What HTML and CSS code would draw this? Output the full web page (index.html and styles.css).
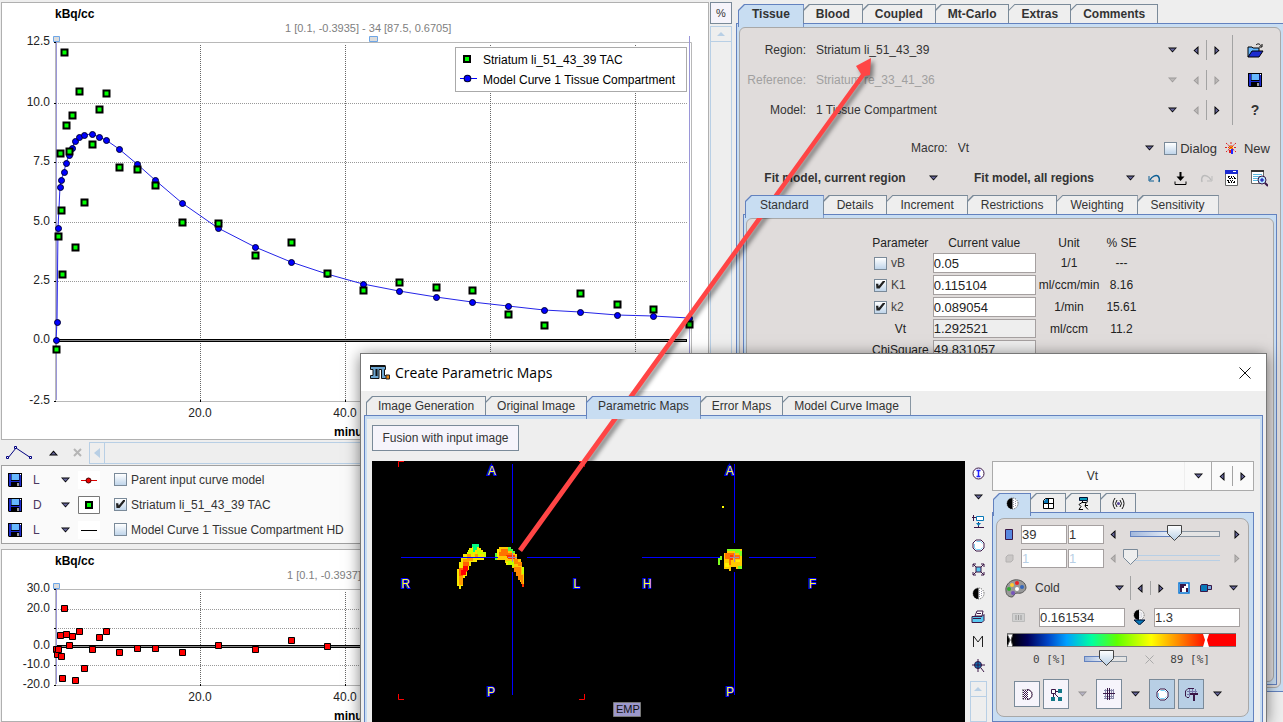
FILE: index.html
```html
<!DOCTYPE html>
<html lang="en">
<head>
<meta charset="utf-8">
<title>Create Parametric Maps</title>
<link rel="stylesheet" href="styles.css">
</head>
<body>
<svg class="defs" aria-hidden="true">
  <symbol id="down" viewBox="0 0 9 6"><path d="M0 .5h9L4.500 5.500z" fill="#000"/><path d="M1.500 1.500h6L4.500 4.300z" fill="#66669a"/></symbol>
  <symbol id="up" viewBox="0 0 9 6"><path d="M0 5.500h9L4.500 .5z" fill="#000"/><path d="M2 4.500h5L4.500 2z" fill="#66669a"/></symbol>
  <symbol id="left" viewBox="0 0 6 9"><path d="M5.500 0v9L.5 4.500z" fill="#000"/><path d="M4.500 2v5L1.800 4.500z" fill="#66669a"/></symbol>
  <symbol id="right" viewBox="0 0 6 9"><path d="M.5 0v9l5-4.500z" fill="#000"/><path d="M1.500 2v5l2.700-2.500z" fill="#66669a"/></symbol>
  <symbol id="floppy" viewBox="0 0 14 14"><path d="M0 0h14v14H1l-1-1z" fill="#000"/><path d="M1 1h12v12H1z" fill="#1c2bd0"/><path d="M3 0h8.500v8H3z" fill="#000"/><path d="M3.500 1h7.500v6H3.500z" fill="#66b8ff"/><path d="M3 9h8.500v5H3z" fill="#000"/><path d="M9 10h2v3H9z" fill="#999"/><path d="M12 1h1v1h-1z" fill="#fff"/></symbol>
  <symbol id="half" viewBox="0 0 13 13"><circle cx="6.500" cy="6.500" r="5.500" fill="#fff" stroke="#555" stroke-dasharray="1 1"/><path d="M6.500 1a5.500 5.500 0 0 0 0 11z" fill="#000"/><path d="M7.500 3v7M9.500 4v5" stroke="#99a" stroke-dasharray="1 1"/></symbol>
  <symbol id="green" viewBox="-5 -5 10 10"><path d="M-4-4h8v8h-8z" fill="#000"/><path d="M-2-2h4v4h-4z" fill="#0f0"/></symbol>
  <symbol id="blue" viewBox="-5 -5 10 10"><circle r="3" fill="#00f" stroke="#000034"/></symbol>
  <symbol id="red" viewBox="-5 -5 10 10"><path d="M-3-3h6v6h-6z" fill="#f00" stroke="#000"/></symbol>
  <symbol id="blob" viewBox="0 0 13 13"><path d="M4 1h5l3 3v5l-3 3H4L1 9V4z" fill="#fff" stroke="#3a1747"/><path d="M4.500 2.500h4l2 2M2.500 5v4l2 1.500h4l2-2" fill="none" stroke="#7cd0f5"/></symbol>
</svg>

<div class="app">
  <div class="plots">
    <section class="panel plot-main">
      <svg class="plot" viewBox="2 3 706 436" preserveAspectRatio="xMinYMin meet" role="img" aria-label="Tissue curve">
        <g class="axis-box"><path d="M55 42.500H691.500V401M55.500 43V401.500H691"/></g>
        <g class="grid-h"><path d="M56 103.500H687M56 162.500H687M56 222.500H687M56 281.500H687"/></g>
        <g class="grid-v"><path d="M200.500 45V401M345.500 45V401M490.500 45V401M635.500 45V401"/></g>
        <path class="tick" d="M54 42.500h2M54 103.500h2M54 162.500h2M54 222.500h2M54 281.500h2M54 340.500h2M54 401.500h2M200.500 400v2M345.500 400v2"/>
        <path d="M56.500 38V400M689.500 36V400" stroke="#9a96d8"/>
        <path d="M57 340.500H687" stroke="#000" stroke-width="3"/><path d="M57 340.500H686" stroke="#888"/>
        <g fill="#dcdcdc" stroke="#6ea6e6"><path d="M53.500 36.500h6v5h-6zM369.500 36.500h8v5h-8z"/></g>
        <polyline class="curve" points="56,340 57,322 58,228 60,187 61,180 64,172 66,163 69,155 72,148 75,141 79,137 84,135 92,134 99,137 106,140 119,149 137,164 155,180 182,203 218,228 255,247 291,262 327,274 363,284 399,291 436,297 472,302 508,306 544,310 580,312 617,315 653,316 689,318"/>
        <g id="model-points"></g>
        <g id="tac-points"></g>
        <rect x="455.500" y="47.500" width="231" height="44" fill="#fff" stroke="#aaa"/>
        <use href="#green" x="462" y="54" width="10" height="10"/>
        <path d="M460 78.500h17" stroke="#00f"/><use href="#blue" x="462" y="73" width="11" height="11"/>
        <g class="legend"><text x="483" y="64">Striatum li_51_43_39 TAC</text><text x="483" y="84">Model Curve 1 Tissue Compartment</text></g>
        <text class="unit" x="55" y="18">kBq/cc</text>
        <text class="range" x="285" y="32">1 [0.1, -0.3935] - 34 [87.5, 0.6705]</text>
        <g class="y-labels"><text x="50" y="45">12.5</text><text x="50" y="106">10.0</text><text x="50" y="165">7.5</text><text x="50" y="225">5.0</text><text x="50" y="284">2.5</text><text x="50" y="343">0.0</text><text x="50" y="404">-2.5</text></g>
        <g class="x-labels"><text x="200" y="417">20.0</text><text x="345" y="417">40.0</text></g>
        <text class="unit" x="334" y="436">minutes</text>
      </svg>
    </section>

    <div class="curve-bar">
      <button class="flat" aria-label="Curves"><svg width="28" height="14" viewBox="0 0 28 14"><path d="M2 12L10 2l15 10" fill="none" stroke="#000080"/><path d="M.5 10.500h2v2h-2zM8.500 .5h2v2h-2zM23.500 10.500h2v2h-2z" fill="#fff" stroke="#000080"/></svg></button>
      <button class="flat" aria-label="Up"><svg width="9" height="6"><use href="#up"/></svg></button>
      <button class="flat" aria-label="Remove"><svg width="9" height="9"><path d="M1 1l7 7M8 1L1 8" stroke="#b5b5b5" stroke-width="2"/></svg></button>
      <div class="h-scroll"><button aria-label="Scroll left"><svg width="6" height="10"><path d="M6 0v10L0 5z" fill="#b8cfe5"/></svg></button></div>
    </div>

    <section class="panel curve-list">
      <div class="curve-row"><svg width="14" height="14"><use href="#floppy"/></svg><span class="kind">L</span><svg class="drop" width="9" height="6"><use href="#down"/></svg><svg class="swatch" width="22" height="18"><path d="M3 9.500h16" stroke="#d00"/><circle cx="10.500" cy="9.500" r="2.500" fill="#e00" stroke="#400"/></svg><label><input type="checkbox">Parent input curve model</label></div>
      <div class="curve-row"><svg width="14" height="14"><use href="#floppy"/></svg><span class="kind">D</span><svg class="drop" width="9" height="6"><use href="#down"/></svg><svg class="swatch" width="22" height="18"><path d="M.5 .5h21v17H.5z" fill="none" stroke="#777"/><use href="#green" x="6" y="4" width="10" height="10"/></svg><label><input type="checkbox" checked>Striatum li_51_43_39 TAC</label></div>
      <div class="curve-row"><svg width="14" height="14"><use href="#floppy"/></svg><span class="kind">L</span><svg class="drop" width="9" height="6"><use href="#down"/></svg><svg class="swatch" width="22" height="18"><path d="M3 9.500h16" stroke="#000"/></svg><label><input type="checkbox">Model Curve 1 Tissue Compartment HD</label></div>
    </section>

    <section class="panel plot-residual">
      <svg class="plot" viewBox="2 551 706 171" preserveAspectRatio="xMinYMin meet" role="img" aria-label="Residuals">
        <g class="axis-box"><path d="M55 590.500H691.500V686M55.500 591V686.500H691"/></g>
        <g class="grid-h"><path d="M56 610.500H687M56 629.500H687M56 666.500H687"/></g>
        <g class="grid-v"><path d="M200.500 593V686M345.500 593V686"/></g>
        <path class="tick" d="M54 590.500h2M54 610.500h2M54 629.500h2M54 647.500h2M54 666.500h2M54 686.500h2M200.500 685v2M345.500 685v2"/>
        <path d="M56.500 588V685" stroke="#9a96d8"/>
        <path d="M57 647.500H687" stroke="#000" stroke-width="3"/><path d="M57 647.500H686" stroke="#888"/>
        <path d="M53.500 584.500h6v5h-6z" fill="#dcdcdc" stroke="#6ea6e6"/>
        <g id="residual-points"></g>
        <text class="unit" x="55" y="566">kBq/cc</text>
        <text class="range" x="287" y="580">1 [0.1, -0.3937] - 34</text>
        <g class="y-labels"><text x="50" y="593">30.0</text><text x="50" y="613">20.0</text><text x="50" y="650">0.0</text><text x="50" y="669">-10.0</text><text x="50" y="689">-20.0</text></g>
        <g class="x-labels"><text x="200" y="702">20.0</text><text x="345" y="702">40.0</text></g>
        <text class="unit" x="334" y="721">minutes</text>
      </svg>
    </section>
  </div>

  <div class="side-scroll">
    <button class="percent">%</button>
    <div class="v-scroll"><button aria-label="Scroll up"><svg width="8" height="4"><path d="M0 4h8L4 0z" fill="#b8cfe5"/></svg></button></div>
  </div>

  <main class="model">
    <nav class="tabs bold">
      <button class="tab active">Tissue</button><button class="tab">Blood</button><button class="tab">Coupled</button><button class="tab">Mt-Carlo</button><button class="tab">Extras</button><button class="tab">Comments</button>
    </nav>
    <div class="pane outer"><div class="sheet">
      <div class="choices">
        <div class="choice-rows">
          <div class="choice"><label for="region">Region:</label><select id="region"><option>Striatum li_51_43_39</option></select><svg width="9" height="6"><use href="#down"/></svg><button class="flat" aria-label="Previous region"><svg width="6" height="9"><use href="#left"/></svg></button><i></i><button class="flat" aria-label="Next region"><svg width="6" height="9"><use href="#right"/></svg></button></div>
          <div class="choice off"><label for="reference">Reference:</label><select id="reference" disabled><option>Striatum re_33_41_36</option></select><svg width="9" height="6"><use href="#down"/></svg><button class="flat" aria-label="Previous reference" disabled><svg width="6" height="9"><use href="#left"/></svg></button><i></i><button class="flat" aria-label="Next reference" disabled><svg width="6" height="9"><use href="#right"/></svg></button></div>
          <div class="choice"><label for="model">Model:</label><select id="model"><option>1 Tissue Compartment</option></select><svg width="9" height="6"><use href="#down"/></svg><button class="flat" aria-label="Previous model" disabled><svg width="6" height="9"><use href="#left"/></svg></button><i></i><button class="flat" aria-label="Next model"><svg width="6" height="9"><use href="#right"/></svg></button></div>
        </div>
        <div class="file-tools">
          <button class="flat" aria-label="Open"><svg width="17" height="15" viewBox="0 0 17 15"><path d="M1 14V4h4l1 1h6v4" fill="#66b8ff" stroke="#000"/><path d="M1 14l4-6h11l-4 6z" fill="#1c2bd0" stroke="#000"/><path d="M9 2c2-2 4-1 5 1M15 1v3h-3" fill="none" stroke="#000"/></svg></button>
          <button class="flat" aria-label="Save"><svg width="14" height="14"><use href="#floppy"/></svg></button>
          <button class="flat help">?</button>
        </div>
      </div>
      <div class="macro">
        <label for="macro">Macro:</label><select id="macro"><option>Vt</option></select><svg width="9" height="6"><use href="#down"/></svg>
        <label class="check"><input type="checkbox">Dialog</label>
        <svg width="12" height="12"><path d="M1 1l10 9M11 1L1 10M6 0v6M0 5.500h12" stroke="#d22" stroke-dasharray="2 1"/><path d="M4 4h4v3H4z" fill="#fd0"/><path d="M4 4l4 3M8 4L4 7" stroke="#d22"/><path d="M4 8h2v3H4z" fill="#d22"/><path d="M6 7h2v5H6z" fill="#22f"/></svg>
        <button class="flat">New</button>
      </div>
      <div class="fit">
        <button class="flat strong fit-current">Fit model, current region</button><button class="flat" aria-label="Fit options"><svg width="9" height="6"><use href="#down"/></svg></button>
        <button class="flat strong fit-all">Fit model, all regions</button><button class="flat" aria-label="Fit all options"><svg width="9" height="6"><use href="#down"/></svg></button>
        <div class="fit-tools">
          <button class="flat" aria-label="Undo"><svg width="13" height="9"><path d="M1 2v5h5" fill="none" stroke="#0d5f94"/><path d="M2 6C4 2 8 1 10 2q2 2 1 6" fill="none" stroke="#0d5f94" stroke-width="1.500"/></svg></button>
          <button class="flat" aria-label="Store"><svg width="13" height="13"><path d="M6.500 0v6" stroke="#000" stroke-width="2"/><path d="M2.500 4.500h8l-4 4.500z" fill="#000"/><path d="M1 9.500v3h11v-3" fill="none" stroke="#000"/></svg></button>
          <button class="flat" aria-label="Redo"><svg width="13" height="9"><path d="M12 2v5H7" fill="none" stroke="#bbb"/><path d="M11 6C9 2 5 1 3 2Q1 4 2 8" fill="none" stroke="#bbb" stroke-width="1.500"/></svg></button>
          <button class="flat" aria-label="Report"><svg width="13" height="16"><path d="M.5 .5h12v15H.5z" fill="#fff" stroke="#666"/><path d="M0 0h13v4H0z" fill="#1c2bd0"/><path d="M8 1.500h3" stroke="#fff"/><path d="M3 6.500h6M4 8.500h7M2 10.500h6M3 12.500h7" stroke="#000" stroke-dasharray="2 1 1 1"/><path d="M3 7.500h7M3 11.500h7" stroke="#000" stroke-dasharray="1 2"/></svg></button>
          <button class="flat" aria-label="View table"><svg width="17" height="17"><path d="M.5 .5h12v13H.5z" fill="#fff" stroke="#666"/><path d="M0 0h13v2H0z" fill="#333"/><path d="M2 4.500h9M2 6.500h8M2 8.500h5M2 10.500h5" stroke="#5ab8e0"/><circle cx="11" cy="10" r="4" fill="#b9e6ff" stroke="#3a1747"/><path d="M9 10h4M11 8v4" stroke="#00a" /><path d="M14 13l3 3" stroke="#3a1747" stroke-width="2"/></svg></button>
        </div>
      </div>
      <nav class="tabs inner-tabs">
        <button class="tab active">Standard</button><button class="tab">Details</button><button class="tab">Increment</button><button class="tab">Restrictions</button><button class="tab">Weighting</button><button class="tab">Sensitivity</button>
      </nav>
      <div class="pane inner"><div class="sheet">
        <table>
          <thead><tr><th>Parameter</th><th>Current value</th><th>Unit</th><th>% SE</th></tr></thead>
          <tbody>
          <tr><td><label class="check"><input type="checkbox">vB</label></td><td><input type="text" aria-label="vB value" value="0.05"></td><td>1/1</td><td>---</td></tr>
          <tr><td><label class="check"><input type="checkbox" checked>K1</label></td><td><input type="text" aria-label="K1 value" value="0.115104"></td><td>ml/ccm/min</td><td>8.16</td></tr>
          <tr><td><label class="check"><input type="checkbox" checked>k2</label></td><td><input type="text" aria-label="k2 value" value="0.089054"></td><td>1/min</td><td>15.61</td></tr>
          <tr class="result"><td>Vt</td><td><input type="text" aria-label="Vt value" value="1.292521" readonly></td><td>ml/ccm</td><td>11.2</td></tr>
          <tr class="result"><td>ChiSquare</td><td><input type="text" aria-label="ChiSquare value" value="49.831057" readonly></td><td></td><td></td></tr>
          </tbody>
        </table>
      </div></div>
    </div></div>
  </main>
</div>

<div class="dialog" role="dialog" aria-labelledby="dialog-title">
  <header class="title-bar">
    <svg width="20" height="15" viewBox="0 0 20 15"><path d="M.5 1.500h15v3h-1v6h2v3h-5v-9H9v9H.5v-3H3v-6H.5z" fill="#6ba5d0" stroke="#111"/><path d="M0 1h15.500M6.500 4v7" stroke="#111" stroke-width="2"/><path d="M16 10h3.500v4H16z" fill="#e8820c" stroke="#222"/></svg>
    <h1 id="dialog-title">Create Parametric Maps</h1>
    <button class="flat" aria-label="Close"><svg width="12" height="12"><path d="M.5 .5l11 11M11.500 .5l-11 11" stroke="#111"/></svg></button>
  </header>
  <nav class="tabs dialog-tabs">
    <button class="tab">Image Generation</button><button class="tab">Original Image</button><button class="tab active">Parametric Maps</button><button class="tab">Error Maps</button><button class="tab">Model Curve Image</button>
  </nav>
  <div class="pane dialog-pane">
    <button class="fusion">Fusion with input image</button>
    <div class="viewer">
      <div class="canvas">
        <svg viewBox="0 3 1779 783" preserveAspectRatio="xMinYMin slice" role="img" aria-label="Parametric map slices">
          <path d="M0 0h3000v1500H0z" fill="#000"/>
          <g shape-rendering="crispEdges">
            <path d="M300 252h21v12h6v6h6v6h8v16h-6v8h-20v6h-18v12h-6v12h-6v18h-6v6h-6v24h-6v10h-6v-10h-6v-51h6v-21h6v-12h6v-12h12v-6h6v-12h9z" fill="#f6e800"/>
            <path d="M300 252h21v10h-6v8h-12zM303 276h6v-6h-6z" fill="#00ff80"/><path d="M290 270h12v12h12v-12h14v6h13v14h-6v-8h-12v6h-18v-6h-20z" fill="#c6ff00"/>
            <path d="M285 282h12v12h6v8h-12v6h-18v-12h12zM261 335h12v40h-12zM309 282h8v10h-8z" fill="#ff9c00"/>
            <path d="M273 306h18v12h-6v18h-12v12h-12v-24h12z" fill="#ff6000"/><path d="M273 318h14v16h-6v12h-14v-16h6z" fill="#f00"/>
            <path d="M381 261h36v6h6v6h6v9h6v15h12v12h3v12h6v58h-7v-12h-6v-6h-6v-12h-6v-12h-6v-12h-6v-10h-12v-6h-8v-8h-30v-20h6v-13h6z" fill="#ffc800"/>
            <path d="M407 261h10v6h6v6h6v6h-10v-6h-12zM369 280h6v20h-6z" fill="#4dff40"/><path d="M401 303h24v18h-6v-6h-12v-6h-6zM449 322h7v20h-7z" fill="#c6ff00"/><path d="M375 268h6v24h-6zM401 306h6v8h-6z" fill="#fff000"/>
            <path d="M387 267h20v12h12v15h-12v-6h-26v-12h6z" fill="#ff7200"/><path d="M401 284h28v12h-22zM431 330h12v8h-12zM449 372h7v8h-7z" fill="#ff3000"/>
            <path d="M425 297h12v8h12v14h-12v-8h-12zM425 322h22v22h6v28h-6v-12h-10v-12h-6v-12h-6z" fill="#ff8600"/>
            <path d="M1065 267h45v59h-18v-4h-15v11h-6v-7h-15v-46h9z" fill="#ffcb00"/>
            <path d="M1065 267h40v6h5v14h-9v-8h-12v-6h-24zM1044 288h6v12h-6v15h-6v-21h6zM1098 318h12v8h-12z" fill="#7fff20"/><path d="M1059 310h12v10h-12zM1092 300h12v6h-12z" fill="#fff000"/>
            <path d="M1059 280h30v6h15v12h-15v-6h-12v24h-6v-20h-12z" fill="#ff7200"/><path d="M1074 285h10v16h-10z" fill="#ff3800"/>
            <path d="M1050 138h6v6h-6z" fill="#ff0"/>
          </g>
          <path d="M421.500 12V249M421.500 336V705M87 292.500H378M465 292.500H624M1087.500 12V249M1087.500 336V705M810 292.500H1044M1131 292.500H1332" stroke="#00f" stroke-width="3"/>
          <path d="M421.500 279v27M408 292.500h27M1087.500 279v27M1074 292.500h27" stroke="#a58bb0" stroke-width="3"/>
          <path d="M79.500 21V4.500H96M621 4.500h16.500V21M79.500 702v16.500H96M621 718.500h16.500V702" fill="none" stroke="#f00" stroke-width="3"/>
          <g class="orient"><text x="347" y="45">A</text><text x="345" y="708">P</text><text x="88" y="384">R</text><text x="604" y="384">L</text><text x="1061" y="45">A</text><text x="1062" y="708">P</text><text x="812" y="384">H</text><text x="1310" y="384">F</text></g>
          <path d="M724.500 727.500h81v42h-81z" fill="#9c98cc" stroke="#777" stroke-width="3"/><text class="emp" x="732" y="759">EMP</text>
        </svg>
      </div>
      <div class="tool-strip">
        <button class="flat" aria-label="Info"><svg width="13" height="13"><circle cx="6.500" cy="6.500" r="5.500" fill="#fff" stroke="#3a1747"/><path d="M4.500 3.500h4M6.500 3.500v6M4.500 9.500h4" stroke="#22f" stroke-width="1.500"/></svg></button>
        <button class="flat" aria-label="More"><svg width="9" height="6"><use href="#down"/></svg></button>
        <button class="flat" aria-label="Layout"><svg width="13" height="13"><path d="M1.500 0v6M0 2.500h4M2 12.500h10M6.500 7v5" stroke="#3a1747"/><path d="M4.500 1.500h7v4h-7z" fill="#fff" stroke="#0878b8"/><path d="M4 8h5l-2.500 3z" fill="#0878b8"/></svg></button>
        <button class="flat" aria-label="Contour"><svg width="13" height="13"><use href="#blob"/></svg></button>
        <button class="flat" aria-label="Fit"><svg width="13" height="13"><path d="M1 1l11 11M12 1L1 12M1 4V1h3M9 1h3v3M1 9v3h3M12 9v3H9" stroke="#3a1747" fill="none"/><path d="M4 4h5v5H4z" fill="#5ac8f0" stroke="#3a1747"/></svg></button>
        <button class="flat" aria-label="Contrast"><svg width="13" height="13"><use href="#half"/></svg></button>
        <button class="flat" aria-label="Print"><svg width="14" height="14"><path d="M4 6l2-5h6l-1 5z" fill="#fff" stroke="#3a1747"/><path d="M1 6.500h10l2-2v6l-2 2H1z" fill="#5ac8f0" stroke="#3a1747"/><path d="M2 8.500h8M6 3.500h4" stroke="#3a1747"/></svg></button>
        <button class="flat" aria-label="Markers"><svg width="12" height="12"><path d="M1.500 12V1l4.500 6 4.500-6v11" fill="none" stroke="#222"/></svg></button>
        <button class="flat" aria-label="Target"><svg width="13" height="13"><path d="M6 0v13M0 6h13M9 9l3 4" stroke="#3a1747"/><circle cx="6" cy="6" r="3.500" fill="#0878b8" stroke="#3a1747"/><path d="M6 2v8M2 6h8" stroke="#3a1747"/></svg></button>
        <div class="v-scroll small"><button aria-label="Scroll up"><svg width="8" height="4"><path d="M0 4h8L4 0z" fill="#b8cfe5"/></svg></button></div>
      </div>
      <div class="controls">
        <div class="map-combo"><select aria-label="Map"><option>Vt</option></select><span class="cell"><svg width="9" height="6"><use href="#down"/></svg></span><span class="cell nav"><button class="flat" aria-label="Previous map"><svg width="6" height="9"><use href="#left"/></svg></button><i></i><button class="flat" aria-label="Next map"><svg width="6" height="9"><use href="#right"/></svg></button></span></div>
        <nav class="tabs icon-tabs">
          <button class="tab active" aria-label="Colors"><svg width="13" height="13"><use href="#half"/></svg></button>
          <button class="tab" aria-label="Layout"><svg width="11" height="11"><path d="M2.500 .5h8v10H.5v-8z" fill="#fff" stroke="#000"/><path d="M1 3l2-2h2v4H1z" fill="#0878b8"/><path d="M5.500 0v11M0 5.500h11" stroke="#000"/></svg></button>
          <button class="tab" aria-label="Tools"><svg width="11" height="13"><path d="M1.500 .5h8v3h-8z" fill="#0898b8" stroke="#013"/><path d="M4.500 4v2M1 7.500l3-2h4l2-1M8 6l-1 3 3 3.500M5 12.500H1l2-3-2-2M10 8.500H7" fill="#fff" stroke="#000"/></svg></button>
          <button class="tab" aria-label="Signal"><svg width="13" height="13"><path d="M3 1Q-1 6.500 3 12M10 1q4 5.500 0 11M5 3Q2 6.500 5 10M8 3q3 3.500 0 7" fill="none" stroke="#111"/><circle cx="6.500" cy="6.500" r="1.500" fill="#549"/></svg></button>
        </nav>
        <div class="pane color-pane"><div class="sheet">
          <div class="slice"><svg width="9" height="11"><path d="M.5 .5h7v10h-7z" fill="#5888e0" stroke="#3a1747"/></svg><input type="text" aria-label="Slice" value="39"><input class="step" type="text" aria-label="Slice step" value="1"><svg width="6" height="9"><use href="#left"/></svg><input type="range" aria-label="Slice position" value="49"><svg width="6" height="9"><use href="#right"/></svg></div>
          <div class="slice off"><svg width="9" height="9"><path d="M1 3l2-2h5v5L6 8H1z" fill="#999" stroke="#555"/></svg><input type="text" aria-label="Frame" value="1" disabled><input class="step" type="text" aria-label="Frame step" value="1" disabled><svg width="6" height="9"><use href="#left"/></svg><input type="range" class="empty" aria-label="Frame position" value="0" disabled><svg width="6" height="9"><use href="#right"/></svg></div>
          <div class="palette">
            <svg width="22" height="19"><path d="M9 1C4 2 0 7 1 12c0 4 3 6 6 6 2 0 2-4 5-4 4 1 8-1 9-5 0-6-6-9-12-8z" fill="#999" stroke="#555"/><circle cx="12" cy="4" r="2" fill="#e22"/><circle cx="7" cy="6" r="2" fill="#fc3"/><circle cx="4" cy="10" r="2" fill="#3a3"/><circle cx="17" cy="8" r="2" fill="#36b"/><circle cx="12" cy="10" r="2" fill="#fff"/><circle cx="8" cy="14" r="2" fill="#75b"/></svg>
            <select aria-label="Color table"><option>Cold</option></select><svg width="9" height="6"><use href="#down"/></svg><i class="tall"></i><svg width="6" height="9"><use href="#left"/></svg><i></i><svg width="6" height="9"><use href="#right"/></svg>
            <svg class="invert" width="12" height="12"><path d="M1 1h10v10H1z" fill="#fff" stroke="#0878d8" stroke-width="1.500"/><path d="M2 2h6v2H6v2H4v4H2zM8 6h2v4H8z" fill="#3a1747"/></svg>
            <svg width="12" height="10"><path d="M.5 3l1-1.500h6v7h-7z" fill="#0878b8" stroke="#3a1747"/><path d="M8 2.500h3.500v4H8" fill="#7ad" stroke="#3a1747"/></svg>
            <svg class="last" width="9" height="6"><use href="#down"/></svg>
          </div>
          <div class="limits"><svg width="13" height="9"><path d="M.5 .5h12v8H.5z" fill="#d0d0d0" stroke="#bbb"/><path d="M4 2v5M6.500 2v5M9 2v5" stroke="#999"/></svg><input type="text" aria-label="Lower limit" value="0.161534"><svg width="13" height="16"><svg width="12" height="12"><use href="#half"/></svg><path d="M1 11h11l-5.500 5z" fill="#0878b8" stroke="#013"/></svg><input type="text" aria-label="Upper limit" value="1.3"></div>
          <div class="ramp"><svg width="6" height="13"><path d="M0 0h6L4 6l2 7H0l3-7z" fill="#fff" stroke="#555"/></svg><svg class="end" width="6" height="13"><path d="M0 0h6L4 6l2 7H0l2-7z" fill="#fff"/></svg></div>
          <div class="percents"><output>0 [%]</output><input type="range" aria-label="Color center" value="55"><button class="flat" aria-label="Reset"><svg width="9" height="9"><path d="M.5 .5l8 8M8.500 .5l-8 8" stroke="#aaa"/></svg></button><output>89 [%]</output></div>
          <div class="modes">
            <button class="mode first" aria-label="Interpolate"><svg width="13" height="13"><path d="M1.500 1.500h5a5 5 0 0 1 0 10h-5z" fill="#fff" stroke="#777" stroke-dasharray="1 1"/><path d="M2.500 2v9M4.500 2v9M6.500 2v9" stroke="#3a1747" stroke-dasharray="1 1"/><path d="M3.500 2v9M5.500 2v9" stroke="#3a1747" stroke-dasharray="1 1" stroke-dashoffset="1"/><path d="M6 1.500a5 5 0 0 1 0 10" fill="none" stroke="#3a1747"/></svg></button>
            <button class="mode" aria-label="Blocks"><svg width="13" height="13"><path d="M1.500 1.500h4v4h-4z" fill="#fff" stroke="#3a1747"/><path d="M8 1h4v4H8zM1 9h4v4H1zM8 9h4v4H8z" fill="#178"/><path d="M3.500 6v3M6 3.500h2M5 6l3 3" stroke="#3a1747"/></svg></button>
            <svg class="pale" width="9" height="6"><use href="#down"/></svg>
            <button class="mode" aria-label="Grid"><svg width="12" height="12"><path d="M2.500 1v10M8.500 1v10M10.500 1v10M1 2.500h10M1 8.500h10M1 10.500h10" stroke="#88a"/><path d="M4.500 0v12M6.500 0v12M0 5.500h12" stroke="#3a1747"/></svg></button>
            <svg width="9" height="6"><use href="#down"/></svg>
            <button class="mode on" aria-label="Outline"><svg width="13" height="13"><use href="#blob"/></svg></button>
            <button class="mode on" aria-label="Annotation"><svg width="13" height="13"><path d="M4 9.500H2L.5 8V3L3 .5h6" stroke="#3a1747" fill="none"/><path d="M4.500 1v8M7.500 1v4M10.500 1v4M2 3.500h10M2 6.500h3" stroke="#77a" fill="none"/><path d="M5 5h8v2h-3v6H8V7H5z" fill="#3a1747"/></svg></button>
            <svg width="9" height="6"><use href="#down"/></svg>
          </div>
        </div></div>
      </div>
    </div>
  </div>
</div>

<svg class="callout" width="400" height="540" viewBox="500 40 400 540" aria-hidden="true"><path d="M518 549L861 74l-5-8 15-8-1 17-5 1L522 552z" fill="#ff4545"/></svg>
<script src="points.js"></script>
</body>
</html>
```
FILE: points.js
```js
// Marker positions in plot coordinates, listed as x,y pairs.
const series = {
  "model-points": ["blue", [56,340,57,322,58,228,60,187,61,180,64,172,66,163,69,155,72,148,75,141,79,137,84,135,92,134,99,137,106,140,119,149,137,164,155,180,182,203,218,228,255,247,291,262,327,274,363,284,399,291,436,297,472,302,508,306,544,310,580,312,617,315,653,316,689,318]],
  "tac-points": ["green", [64,52,79,91,106,93,99,109,72,115,66,125,92,144,60,153,69,151,119,167,137,169,155,185,84,202,61,210,182,222,218,223,58,236,75,247,62,274,255,255,291,242,327,273,363,290,56,349,399,282,436,287,472,290,508,314,544,325,580,293,617,304,653,309,689,324]],
  "residual-points": ["red", [56,650,57,655,58,650,64,609,60,636,66,635,72,637,79,632,106,632,99,638,69,646,92,650,119,653,137,649,155,649,182,653,218,646,255,650,291,641,327,647,61,657,62,679,75,681,84,669]]
};
for (const [id, [shape, xy]] of Object.entries(series)) {
  const group = document.getElementById(id);
  for (let i = 0; i < xy.length; i += 2) {
    const mark = document.createElementNS("http://www.w3.org/2000/svg", "use");
    mark.setAttribute("href", "#" + shape);
    mark.setAttribute("x", xy[i] - 5 + 0.5);
    mark.setAttribute("y", xy[i + 1] - 5 + 0.5);
    mark.setAttribute("width", 10);
    mark.setAttribute("height", 10);
    group.append(mark);
  }
}
```
FILE: styles.css
```css
* { box-sizing: border-box; }
body { margin: 0; height: 100vh; overflow: hidden; position: relative; background: #eee; color: #333; font: 12px "Liberation Sans", Arial, sans-serif; }
button, input, select { font: inherit; color: inherit; margin: 0; }
button { padding: 0; }
select { appearance: none; border: 0; background: none; padding: 0; opacity: 1; }
svg { display: block; flex: none; }
i { width: 1px; height: 20px; background: #a3a3a3; }
.defs { position: absolute; width: 0; height: 0; }
.flat { border: 0; background: none; display: flex; align-items: center; justify-content: center; }
.strong { font-weight: bold; }

.app { display: flex; height: 100%; gap: 1px; padding: 2px 0 0 1px; }
.plots { flex: 1 1 708px; min-width: 0; display: flex; flex-direction: column; }
.panel { border: 1px solid #b0b0b0; background: #fff; flex: none; }
.plot { width: 100%; font-size: 12px; fill: #222; }
.plot-residual { margin-top: 5px; flex: 1; min-height: 0; overflow: hidden; }
.axis-box { fill: none; stroke: #b8b8b8; }
.grid-h, .grid-v { stroke: #999; stroke-dasharray: 1 1; }
.grid-v { stroke: #666; }
.tick { stroke: #000; }
.curve { fill: none; stroke: #2424e8; }
.unit { font-weight: bold; fill: #000; }
.range { font-size: 11px; fill: #808080; }
.y-labels { text-anchor: end; }
.x-labels { text-anchor: middle; }
.legend { fill: #000; }

.curve-bar { display: flex; align-items: center; height: 25px; padding-left: 5px; gap: 15px; }
.h-scroll { flex: 1; height: 22px; border: 1px solid #b8cfe5; margin-left: -8px; }
.h-scroll button { width: 15px; height: 20px; border: 0; border-right: 1px solid #b8cfe5; background: none; display: flex; align-items: center; justify-content: center; }
.curve-list { background: #fafafa; padding: 1px 0 1px 6px; border-color: #a0a0a0; }
.curve-row { display: flex; align-items: center; height: 25px; }
.kind { width: 28px; margin-left: 11px; color: #4a3860; }
.drop { margin-right: 8px; }
.swatch { background: #fff; margin-right: 14px; }
label { white-space: nowrap; }
.curve-row label, .check { display: flex; align-items: center; gap: 4px; }
input[type=checkbox] { appearance: none; width: 13px; height: 13px; border: 1px solid #7a8a99; background: linear-gradient(#fff, #c0d5ea); flex: none; }
input[type=checkbox]:checked::after { content: ""; display: block; width: 9px; height: 8px; margin: 1px; background: #222; clip-path: polygon(0 40%, 25% 40%, 30% 70%, 80% 0, 100% 0, 100% 15%, 40% 100%, 5% 100%); }

.side-scroll { width: 22px; flex: none; display: flex; flex-direction: column; gap: 2px; }
.percent { height: 22px; border: 1px solid #7a8a99; background: #f6f4fb; font-size: 11px; }
.v-scroll { flex: 1; border: 1px solid #b8cfe5; }
.v-scroll button { width: 100%; height: 15px; border: 0; border-bottom: 1px solid #b8cfe5; background: none; display: flex; align-items: center; justify-content: center; }

.model { flex: 1 1 547px; min-width: 0; display: flex; flex-direction: column; margin: 2px 0 30px 3px; }
.tabs { display: flex; padding-left: 2px; position: relative; z-index: 1; }
.tab { height: 19px; padding: 0 12px; border: 1px solid #7a8a99; border-bottom: 0; margin-right: -1px; background: linear-gradient(135deg, #7a8a99 5px, #eee 6px) border-box; clip-path: polygon(6px 0, 100% 0, 100% 100%, 0 100%, 0 6px); white-space: nowrap; }
.tab.active { height: 23px; margin-bottom: -4px; padding-bottom: 4px; border-color: #6382bf; background: linear-gradient(135deg, #6382bf 5px, #c8ddf2 6px) border-box; }
.bold { font-weight: bold; }
.bold .tab.active { padding: 0 13px 4px; }
.pane { border: 1px solid #6382bf; padding: 3px 2px 2px; background: #c8ddf2; flex: 1; min-height: 0; display: flex; flex-direction: column; }
.outer { border-right: 0; padding-bottom: 3px; }
.sheet { flex: 1; border: 1px solid #a8a8a8; border-radius: 6px; background: #e0dcdb; display: flex; flex-direction: column; min-width: 0; }
.outer > .sheet { padding: 7px 3px 2px 3px; }
.choices { display: flex; }
.choice-rows { flex: 1; border-right: 1px solid #a3a3a3; padding-right: 9px; }
.choice { display: flex; align-items: center; height: 30px; }
.choice label { width: 63px; text-align: right; margin-right: 10px; }
.choice select { flex: 1; }
.choice > svg { margin-right: 13px; }
.choice i { margin: 0 4px; }
.off { color: #a0a0a0; }
.choice select:disabled { color: #a0a0a0; }
.off svg, button:disabled svg { filter: grayscale(1); opacity: .3; }
.off button:disabled svg { opacity: .3; }
.choice button { width: 12px; height: 20px; }
.file-tools { width: 44px; display: flex; flex-direction: column; }
.file-tools button { height: 30px; }
.help { font-weight: bold; font-size: 14px; }
.macro { display: flex; align-items: center; height: 30px; margin-top: 8px; padding: 0 7px 0 168px; }
.macro select { flex: 1; margin-left: 10px; }
.macro .check { margin: 0 8px 0 10px; font-size: 13px; gap: 3px; }
.macro .flat { margin-left: 7px; font-size: 13px; }
.fit { display: flex; align-items: center; height: 30px; padding-left: 23px; }
.fit-current { width: 138px; margin-right: 25px; white-space: nowrap; }
.fit-all { margin: 0 32px 0 36px; white-space: nowrap; }
.fit-tools { flex: 1; display: flex; justify-content: space-between; align-items: center; padding: 0 9px 0 13px; }
.inner-tabs { margin: 2px 0 0 1px; padding-left: 1px; }
.inner-tabs .tab { padding: 0 13px; }
.inner-tabs .tab.active { padding: 0 14px 4px; }
.inner > .sheet { padding: 15px 0 0 124px; }
table { border-collapse: collapse; align-self: flex-start; text-align: center; color: #222; }
th { font-weight: normal; height: 18px; padding: 0; }
td { height: 22px; padding: 0 1px; white-space: nowrap; }
.result td { height: 21px; }
td .check { padding-left: 2px; color: #444; }
td:last-child, th:last-child { padding: 0 0 0 6px; min-width: 36px; }
tr > :nth-child(2) { padding: 0 2px 0 3px; }
input[type=text] { border: 1px solid #a5a0a0; background: #fff; font-size: 13px; padding: 0; height: 20px; width: 103px; min-width: 0; display: block; }
input[type=text][readonly] { background: #eee; height: 19px; }

.dialog { position: absolute; left: 360px; right: 16px; top: 353px; bottom: 0; border: 1px solid #777; border-bottom: 0; background: #eee; box-shadow: 0 2px 14px rgba(0, 0, 0, .5); display: flex; flex-direction: column; overflow: hidden; }
.title-bar { display: flex; align-items: center; background: #fff; height: 37px; padding: 0 15px 0 9px; gap: 5px; margin-bottom: 5px; flex: none; }
h1 { margin: 0; flex: 1; font: 14px "Open Sans", "Noto Sans", sans-serif; color: #000; }
.dialog-tabs { padding-left: 5px; }
.dialog-tabs .tab { padding: 0 11px; }
.dialog-tabs .tab.active { padding: 0 11px 4px; }
.dialog-pane { margin: 0 3px 0 3px; border-bottom: 0; background: #eee; padding: 9px 8px 0 7px; box-shadow: inset 0 3px #c8ddf2, inset 2px 0 #c8ddf2, inset -2px 0 #c8ddf2; }
.fusion { width: 147px; height: 26px; flex: none; border: 1px solid #7a8a99; background: #f6f4fb; white-space: nowrap; }
.viewer { display: flex; flex: 1; margin-top: 10px; min-height: 0; }
.canvas { flex: 1; min-width: 0; background: #000; overflow: hidden; }
.canvas svg { width: 100%; height: 100%; }
.orient { font: 36px "Liberation Sans", sans-serif; fill: #ffff30; stroke: #00f; stroke-width: 6px; paint-order: stroke; }
.emp { font: 33px "Liberation Sans", sans-serif; fill: #111; }
.tool-strip { width: 27px; padding: 0 4px 0 3px; display: flex; flex-direction: column; align-items: center; }
.tool-strip .flat { height: 24px; flex: none; }
.small { width: 17px; margin-top: 4px; }
.controls { width: 262px; flex: none; display: flex; flex-direction: column; }
.map-combo { display: flex; height: 30px; flex: none; border: 1px solid #aaa; background: #fafafa; }
.map-combo select { flex: 1; padding-left: 8px; text-align-last: center; }
.cell { display: flex; width: 27px; align-items: center; justify-content: center; border-left: 1px solid #eee; }
.cell.nav { width: 42px; gap: 7px; border-color: #aaa; }
.icon-tabs { margin-top: 2px; padding-left: 1px; }
.icon-tabs .tab { width: 36px; padding: 0; display: flex; align-items: center; justify-content: center; }
.icon-tabs .tab.active { width: 38px; padding: 0 0 4px; }
.color-pane { padding: 5px 4px 4px 3px; }
.color-pane > .sheet { padding: 3px 8px 0 8px; border-radius: 8px; }
.slice { display: flex; align-items: center; height: 24px; }
.color-pane input[type=text] { height: 19px; }
.slice input[type=text] { width: 46px; margin-left: 7px; }
.slice input.step { width: 36px; margin: 0 6px 0 1px; }
.slice input:disabled { color: #b8cfe5; }
input[type=range] { appearance: none; margin: 0 14px; height: 22px; flex: 1; min-width: 0; width: 40px; background: linear-gradient(90deg, #6382bf 50%, #8a96a3 50%) center / 100% 6px no-repeat; }
input[type=range]::-webkit-slider-runnable-track { height: 4px; margin: 0 1px; background: linear-gradient(90deg, #a3b8dc 0, #f0f4fa 50%, #e4e4e4 50%); }
input[type=range]::-webkit-slider-thumb { appearance: none; width: 15px; height: 16px; margin-top: -7px; background: url("data:image/svg+xml,%3Csvg xmlns='http://www.w3.org/2000/svg' width='15' height='16'%3E%3ClinearGradient id='g' x2='0' y2='1'%3E%3Cstop stop-color='%23fff'/%3E%3Cstop offset='1' stop-color='%23b8cfe5'/%3E%3C/linearGradient%3E%3Cpath d='M.5 .5h14v8l-7 7-7-7z' fill='url(%23g)' stroke='%23444'/%3E%3C/svg%3E"); }
input[type=range].empty { background: linear-gradient(#e0dcdb, #e0dcdb) center / 100% 4px no-repeat, linear-gradient(#b8cfe5, #b8cfe5) center / 100% 6px no-repeat; }
input[type=range].empty::-webkit-slider-runnable-track { background: none; margin: 0 -7px; }
input[type=range].empty::-webkit-slider-thumb { background: url("data:image/svg+xml,%3Csvg xmlns='http://www.w3.org/2000/svg' width='15' height='16'%3E%3Cpath d='M.5 .5h14v8l-7 7-7-7z' fill='%23eee' stroke='%237a8a99'/%3E%3C/svg%3E"); }
.palette { display: flex; align-items: center; height: 36px; flex: none; }
.palette select { flex: 1; margin-left: 8px; }
.palette i { height: 14px; margin: 0 7px; }
.palette i.tall { height: 24px; margin: 0 6px; }
.invert { margin: 0 10px 0 14px; }
.last { margin: 0 2px 0 17px; }
.limits { display: flex; align-items: center; gap: 8px; padding-left: 7px; height: 22px; flex: none; }
.limits input[type=text] { flex: 1; width: 40px; }
.limits input[type=text]:first-of-type { margin-left: 6px; }
.ramp { display: flex; height: 14px; margin: 5px 4px 0 2px; flex: none; border: solid #777; border-width: 1px 0; background: linear-gradient(90deg, #000 2%, #00005a 9%, #0046c8 18%, #00a0ff 26%, #00ffa0 37%, #60ff00 48%, #ff0 63%, #ff8800 75%, red 88%); }
.end { margin-left: 190px; }
.percents { display: flex; align-items: center; height: 24px; flex: none; padding: 0 30px 0 28px; font: 11px "DejaVu Sans Mono", monospace; color: #444; }
.percents output { white-space: nowrap; }
.percents input[type=range] { margin: 0 18px; }
.percents button { margin-right: 16px; }
.modes { display: flex; align-items: center; gap: 3px; margin-top: 8px; padding-left: 9px; height: 30px; flex: none; }
.mode { width: 26px; height: 30px; padding: 0; border: 1px solid #7a8a99; background: #f6f4fb; display: flex; align-items: center; justify-content: center; }
.mode.first { height: 26px; }
.mode.on { background: #b8cfe5; }
.modes > svg { margin: 0 6px; }
.pale { opacity: .35; }

.callout { position: absolute; left: 500px; top: 40px; pointer-events: none; filter: drop-shadow(3px 3px 2px rgba(0, 0, 0, .45)); }
```
